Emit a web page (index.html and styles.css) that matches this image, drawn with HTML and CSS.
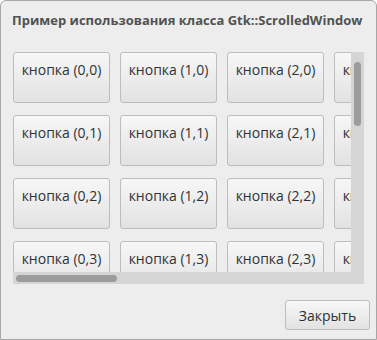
FILE: index.html
```html
<!DOCTYPE html>
<html lang="ru">
<head>
  <meta charset="UTF-8" />
  <title>Gtk::ScrolledWindow</title>
  <link rel="stylesheet" href="styles.css">
</head>
<body>

  <div class="window">
    <div class="titulo">Пример использования класса Gtk::ScrolledWindow</div>

    <!-- Область прокрутки -->
    <div class="scrolled">
      <div class="viewport">
        <div class="rejilla" id="rejilla"></div>
      </div>
      <div class="vbar"><div class="vthumb"></div></div>
      <div class="hbar"><div class="hthumb"></div></div>
      <div class="esquina"></div>
    </div>

    <div class="pie">
      <button class="boton cerrar">Закрыть</button>
    </div>
  </div>

  <script>
    const rejilla = document.getElementById('rejilla');
    for (let j = 0; j < 4; j++) {
      for (let i = 0; i < 4; i++) {
        const b = document.createElement('button');
        b.className = 'boton celda';
        b.textContent = `кнопка (${i},${j})`;
        rejilla.appendChild(b);
      }
    }
  </script>

</body>
</html>
```

FILE: styles.css
```css
body {
  margin: 0;
  font-family: "Open Sans", "DejaVu Sans", sans-serif;
}
.window {
  width: 377px;
  height: 340px;
  box-sizing: border-box;
  border: 1px solid #a6a6a6;
  border-radius: 6px 6px 0 0;
  background-color: #ededed;
  display: flex;
  flex-direction: column;
}
.titulo {
  margin: 9px 0 0 11px;
  height: 20px;
  line-height: 20px;
  font-size: 13px;
  font-weight: bold;
  color: #505352;
  white-space: nowrap;
}
.scrolled {
  margin: 22px 0 0 12px;
  width: 351px;
  height: 232px;
  display: grid;
  grid-template-columns: 338px 13px;
  grid-template-rows: 220px 12px;
}
.viewport {
  overflow: hidden;
}
.rejilla {
  display: grid;
  grid-template-columns: repeat(4, 97px);
  grid-auto-rows: 51px;
  column-gap: 10px;
  row-gap: 12px;
}
.boton {
  font-family: "Open Sans", "DejaVu Sans", sans-serif;
  font-size: 14px;
  color: #2e3436;
  background: linear-gradient(#f7f7f7, #e2e2e2);
  border: 1px solid #bdbdbd;
  border-radius: 3px;
  margin: 0;
  cursor: pointer;
}
.celda {
  padding: 7px 0 0;
  display: flex;
  justify-content: center;
  align-items: flex-start;
  white-space: nowrap;
}
.vbar, .hbar, .esquina {
  background-color: #d5d5d5;
}
.vthumb {
  width: 7px;
  height: 64px;
  margin: 10px 0 0 3px;
  border-radius: 4px;
  background-color: #9c9c9c;
}
.hthumb {
  width: 101px;
  height: 7px;
  margin: 3px 0 0 3px;
  border-radius: 4px;
  background-color: #9c9c9c;
}
.pie {
  display: flex;
  justify-content: flex-end;
  padding: 16px 6px 0 0;
}
.cerrar {
  width: 85px;
  height: 30px;
  padding: 0;
}
```
